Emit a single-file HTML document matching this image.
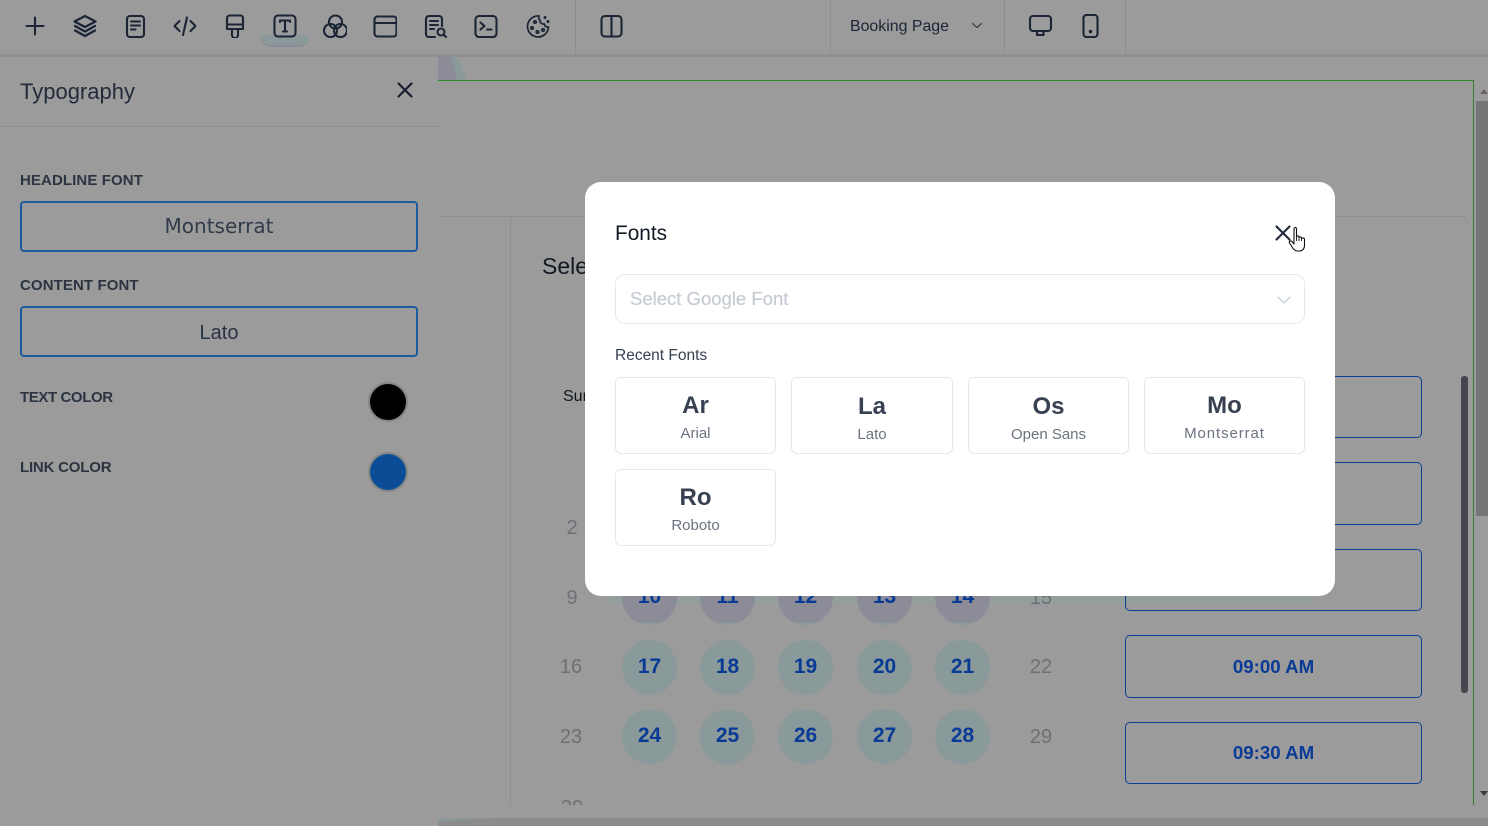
<!DOCTYPE html>
<html><head><meta charset="utf-8"><style>
html,body{margin:0;padding:0;width:1488px;height:826px;overflow:hidden;background:#9b9b9b}
*{box-sizing:border-box}
body{position:relative;font-family:"Liberation Sans",sans-serif;color:#1f2937}
.a{position:absolute}
.t{position:absolute;white-space:nowrap;line-height:1}
.ln{position:absolute;background:#8e8e8e}
.lab{position:absolute;left:20px;font-weight:700;font-size:15px;color:#2b3440;white-space:nowrap;line-height:18px;font-family:"Liberation Sans",sans-serif}
.fb{position:absolute;left:20px;width:398px;height:51px;border:2px solid #1d5a9c;border-radius:4px;display:flex;align-items:center;justify-content:center;color:#2a3342;font-size:20px}
.circ{position:absolute;width:55px;height:55px;border-radius:50%;background:#8a9a9a;color:#093a96;font-weight:700;font-size:21px;line-height:54px;text-align:center}
.pc{background:linear-gradient(#8c8c98 0,#8c8c98 95%,#8a9a9a 95%)}
.day{position:absolute;color:#6f6f76;font-size:20px;line-height:24px;transform:translateX(-50%)}
.tb{position:absolute;left:1125px;width:297px;border:1px solid #0b3f93;border-radius:5px;color:#093a96;font-weight:700;font-size:18.7px;display:flex;align-items:center;justify-content:center}
.card{position:absolute;height:77px;border:1px solid #e5eaee;border-radius:6px;background:#fff;text-align:center}
.card b{position:absolute;left:0;right:0;top:15px;font-size:24px;line-height:26px;color:#374151}
.card span{position:absolute;left:0;right:0;top:47px;font-size:15px;line-height:18px;color:#6b7280}
svg.i{position:absolute;fill:none;stroke:#1b2535;stroke-width:2.1;stroke-linecap:round;stroke-linejoin:round}
</style></head><body>

<!-- toolbar -->
<div class="ln" style="left:0;top:54px;width:1488px;height:3px;background:#8f8f8f"></div>
<div class="ln" style="left:575px;top:0;width:1px;height:54px"></div>
<div class="ln" style="left:830px;top:0;width:1px;height:54px"></div>
<div class="ln" style="left:1004px;top:0;width:1px;height:54px"></div>
<div class="ln" style="left:1125px;top:0;width:1px;height:54px"></div>
<div class="a" style="left:261px;top:35px;width:48px;height:12px;background:#8a9a9a;border-radius:0 0 10px 10px;border-bottom:2px solid #8c8c98"></div>

<svg class="i" style="left:23px;top:14px" width="24" height="24" viewBox="0 0 24 24"><path d="M12 3.500v17M3.500 12h17"/></svg>
<svg class="i" style="left:73px;top:14px;stroke-width:2.300" width="24" height="24" viewBox="0 0 24 24"><path d="M12 2 22.500 7.500 12 13 1.500 7.500z"/><path d="M2 12l10 5.500L22 12"/><path d="M2 16.500l10 5.500 10-5.500"/></svg>
<svg class="i" style="left:123px;top:14px" width="24" height="24" viewBox="0 0 24 24"><rect x="4" y="2" width="17" height="21" rx="3"/><path d="M8 7.500h9M8 11.500h9M8 15.500h4.500"/></svg>
<svg class="i" style="left:173px;top:14px" width="24" height="24" viewBox="0 0 24 24"><path d="M6.500 7 1.500 12l5 5M17.500 7l5 5-5 5M14 3.500 10 21"/></svg>
<svg class="i" style="left:223px;top:14px" width="24" height="24" viewBox="0 0 24 24"><path d="M4 4a2.500 2.500 0 0 1 2.500-2.500h11A2.500 2.500 0 0 1 20 4v11H4z"/><path d="M4 10.500h16"/><path d="M9 15v6a3 3 0 0 0 6 0v-6"/></svg>
<svg class="i" style="left:273px;top:14px" width="24" height="24" viewBox="0 0 24 24"><rect x="1.500" y="1.500" width="21" height="21" rx="3.500"/><path d="M7 8V6.500h10V8M12 6.500v11M10 17.500h4"/></svg>
<svg class="i" style="left:323px;top:14px" width="24" height="24" viewBox="0 0 24 24"><circle cx="12.500" cy="8" r="6.500"/><circle cx="7.500" cy="16.500" r="6.500"/><circle cx="17.500" cy="16.500" r="6.500"/></svg>
<svg class="i" style="left:373px;top:14px" width="24" height="24" viewBox="0 0 24 24"><rect x="1.500" y="2.500" width="22" height="20" rx="3"/><path d="M1.500 9h22"/></svg>
<svg class="i" style="left:424px;top:14px" width="24" height="24" viewBox="0 0 24 24"><path d="M18 12V5a3 3 0 0 0-3-3H5a3 3 0 0 0-3 3v15a3 3 0 0 0 3 3h6"/><path d="M6 7h8M6 11h8M6 15h4"/><circle cx="17" cy="18" r="3.500"/><path d="M19.500 20.500 22 23"/></svg>
<svg class="i" style="left:474px;top:14px" width="24" height="24" viewBox="0 0 24 24"><rect x="1.500" y="2" width="21" height="21" rx="3.500"/><path d="M6.500 8.500l4 3.500-4 3.500M13 15.500h4.500"/></svg>
<svg class="i" style="left:526px;top:14px;stroke-width:1.700" width="24" height="24" viewBox="0 0 24 24"><path d="M13 2a10.500 10.500 0 1 0 9.500 11c-2.500 .5-4-1-4-3-2.500 .5-5-1.500-4.500-4-1.500-.5-1.500-2.500-1-4z"/><circle cx="9" cy="8" r="1.200"/><circle cx="6" cy="14" r="1.200"/><circle cx="11.500" cy="18" r="1.200"/><circle cx="17" cy="16" r="1.200"/><circle cx="19" cy="3.500" r=".6" fill="#1b2535"/><circle cx="22" cy="7.500" r=".6" fill="#1b2535"/></svg>
<svg class="i" style="left:600px;top:14px" width="24" height="24" viewBox="0 0 24 24"><rect x="1.500" y="2" width="20" height="20.500" rx="3.500"/><path d="M11.500 2v20.500"/></svg>

<div class="t" style="left:850px;top:18px;font-size:15.900px;line-height:18px;color:#1b2535">Booking Page</div>
<svg class="i" style="left:970px;top:20px;stroke-width:1.300;stroke:#3a4250" width="14" height="12" viewBox="0 0 14 12"><path d="M2.500 3.500 7 7.500l4.500-4"/></svg>
<svg class="i" style="left:1028px;top:14px" width="25" height="24" viewBox="0 0 25 24"><rect x="2" y="2" width="21" height="15" rx="3"/><path d="M9 17v4h6.500v-4"/></svg>
<svg class="i" style="left:1079px;top:14px" width="24" height="24" viewBox="0 0 24 24"><rect x="4.500" y="1" width="14" height="22" rx="3"/><circle cx="11.500" cy="17.500" r=".7" fill="#1b2535"/></svg>

<!-- left panel -->
<div class="t" style="left:20px;top:80px;font-size:22px;line-height:24px;color:#232b3a">Typography</div>
<svg class="i" style="left:395px;top:80px;stroke:#141c2c" width="20" height="20" viewBox="0 0 20 20"><path d="M3.500 3.500l13 13M16.500 3.500l-13 13"/></svg>
<div class="ln" style="left:0;top:126px;width:438px;height:1px"></div>
<div class="lab" style="top:172px;letter-spacing:.1px">HEADLINE FONT</div>
<div class="fb" style="top:201px;font-family:'DejaVu Sans',sans-serif;font-size:20px;padding-bottom:1px;color:#323b4a">Montserrat</div>
<div class="lab" style="top:277px;letter-spacing:.1px">CONTENT FONT</div>
<div class="fb" style="top:306px;padding-top:4px">Lato</div>
<div class="lab" style="top:389px;letter-spacing:-.4px">TEXT COLOR</div>
<div class="a" style="left:368px;top:382px;width:40px;height:40px;border-radius:50%;background:#000;border:2px solid #868686"></div>
<div class="lab" style="top:459px;letter-spacing:-.2px">LINK COLOR</div>
<div class="a" style="left:368px;top:452px;width:40px;height:40px;border-radius:50%;background:#0a4d96;border:2px solid #868686"></div>

<!-- canvas -->
<svg class="a" style="left:438px;top:57px" width="30" height="23" viewBox="0 0 30 23"><path d="M0 0H18Q25 10 28 23H0z" fill="#8a9a9a"/><path d="M0 0H12Q17 10 19 23H0z" fill="#8c8c98"/></svg>
<div class="a" style="left:438px;top:80px;width:1036px;height:725px;border-top:1px solid #2b8a2b;border-right:1px solid #2f7d2f"></div>
<div class="a" style="left:438px;top:216px;width:1030px;height:7px;border-top:1px solid #8e8e8e;border-right:1px solid #8e8e8e;border-top-right-radius:8px"></div>
<div class="ln" style="left:510px;top:217px;width:1px;height:588px"></div>
<div class="t" style="left:542px;top:253px;font-size:23px;line-height:26px;color:#111820">Select</div>
<div class="t" style="left:563px;top:388px;font-size:16px;line-height:18px;color:#111820">Sun</div>

<div class="a" style="left:608px;top:598px;width:706px;height:5px;background:#929f9f"></div>
<div class="day" style="left:572px;top:516px">2</div>
<div class="day" style="left:572px;top:586px">9</div>
<div class="day" style="left:571px;top:655px">16</div>
<div class="day" style="left:571px;top:725px">23</div>
<div class="a" style="left:550px;top:796px;width:45px;height:9px;overflow:hidden"><div class="day" style="left:22px;top:0">30</div></div>
<div class="day" style="left:1041px;top:586px">15</div>
<div class="day" style="left:1041px;top:655px">22</div>
<div class="day" style="left:1041px;top:725px">29</div>

<div class="circ pc" style="left:622px;top:570px">10</div>
<div class="circ pc" style="left:700px;top:570px">11</div>
<div class="circ pc" style="left:778px;top:570px">12</div>
<div class="circ pc" style="left:857px;top:570px">13</div>
<div class="circ pc" style="left:935px;top:570px">14</div>
<div class="circ" style="left:622px;top:640px">17</div>
<div class="circ" style="left:700px;top:640px">18</div>
<div class="circ" style="left:778px;top:640px">19</div>
<div class="circ" style="left:857px;top:640px">20</div>
<div class="circ" style="left:935px;top:640px">21</div>
<div class="circ" style="left:622px;top:709px">24</div>
<div class="circ" style="left:700px;top:709px">25</div>
<div class="circ" style="left:778px;top:709px">26</div>
<div class="circ" style="left:857px;top:709px">27</div>
<div class="circ" style="left:935px;top:709px">28</div>

<div class="tb" style="top:376px;height:62px"></div>
<div class="tb" style="top:462px;height:63px"></div>
<div class="tb" style="top:549px;height:62px"></div>
<div class="tb" style="top:635px;height:63px">09:00 AM</div>
<div class="tb" style="top:722px;height:62px">09:30 AM</div>

<!-- scrollbars -->
<div class="a" style="left:1461px;top:376px;width:7px;height:317px;background:#45454e;border-radius:3px"></div>
<div class="a" style="left:1476px;top:101px;width:12px;height:415px;background:#757575"></div>
<div class="a" style="left:1480px;top:89px;width:0;height:0;border-left:4px solid transparent;border-right:4px solid transparent;border-bottom:5px solid #6b6266"></div>
<div class="a" style="left:1480px;top:791px;width:0;height:0;border-left:4px solid transparent;border-right:4px solid transparent;border-top:5px solid #3a3a40"></div>
<div class="a" style="left:438px;top:818px;width:1050px;height:8px;background:#8c8c8c"></div>
<svg class="a" style="left:438px;top:818px" width="66" height="4" viewBox="0 0 66 4"><path d="M0 4Q20 1 66 0H0z" fill="#8a9a9a"/></svg>

<!-- modal -->
<div class="a" style="left:585px;top:182px;width:750px;height:414px;background:#fff;border-radius:16px"></div>
<div class="t" style="left:615px;top:222px;font-size:20.800px;line-height:24px;color:#111a24">Fonts</div>
<svg class="i" style="left:1273px;top:223px;stroke:#242d3b;stroke-width:2.200" width="20" height="20" viewBox="0 0 20 20"><path d="M3.500 3.500l13 13M16.500 3.500l-13 13"/></svg>
<svg class="a" style="left:1287px;top:225px" width="22" height="28" viewBox="0 0 22 28"><path d="M7 4c0-2 2.500-2 2.500 0v8c0-1.500 2.500-1.500 2.500 0v1c0-1.500 2.500-1.500 2.500 0v1c0-1.500 3 -1.500 3 .5v6c0 3-2 5.500-5 5.500h-2c-3 0-4.500-2-6-5l-2-3c-.8-1.500 1-3 2.500-1.500L7 19z" fill="#fff" stroke="#111" stroke-width="1.100" stroke-linejoin="round"/><path d="M9.500 12v4M12 13v3M14.500 14v2" stroke="#111" stroke-width=".9" fill="none"/></svg>

<div class="a" style="left:615px;top:274px;width:690px;height:50px;border:1px solid #e5eaee;border-radius:10px"></div>
<div class="t" style="left:630px;top:288px;font-size:18.500px;line-height:22px;color:#c6cbd3;-webkit-text-stroke:.2px #c6cbd3">Select Google Font</div>
<svg class="i" style="left:1276px;top:294px;stroke:#c6d0d6;stroke-width:1.300" width="16" height="12" viewBox="0 0 16 12"><path d="M2 3l6 6 6-6"/></svg>
<div class="t" style="left:615px;top:347px;font-size:15.500px;line-height:18px;color:#374151">Recent Fonts</div>

<div class="card" style="left:615px;top:377px;width:161px"><b>Ar</b><span>Arial</span></div>
<div class="card" style="left:791px;top:377px;width:162px"><b style="top:16px">La</b><span style="top:48px">Lato</span></div>
<div class="card" style="left:968px;top:377px;width:161px"><b style="top:16px">Os</b><span style="top:48px">Open Sans</span></div>
<div class="card" style="left:1144px;top:377px;width:161px"><b>Mo</b><span style="letter-spacing:.9px">Montserrat</span></div>
<div class="card" style="left:615px;top:469px;width:161px"><b>Ro</b><span>Roboto</span></div>

</body></html>
